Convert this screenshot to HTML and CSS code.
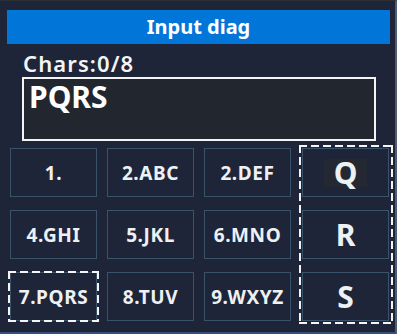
FILE: index.html
```html
<!DOCTYPE html>
<html>
<head>
<meta charset="utf-8">
<link rel="stylesheet" href="styles.css">
</head>
<body>
<div class="dialog">
  <div class="title">Input diag</div>
  <div class="count">Chars:0/8</div>
  <div class="input">PQRS</div>
  <div class="keypad">
    <div class="grid">
      <div class="key">1.</div>
      <div class="key">2.ABC</div>
      <div class="key">2.DEF</div>
      <div class="key">4.GHI</div>
      <div class="key">5.JKL</div>
      <div class="key">6.MNO</div>
      <div class="key focused">7.PQRS</div>
      <div class="key">8.TUV</div>
      <div class="key">9.WXYZ</div>
    </div>
    <div class="letters dashed">
      <div class="key big"><span class="sel">Q</span></div>
      <div class="key big">R</div>
      <div class="key big">S</div>
    </div>
  </div>
</div>
</body>
</html>
```

FILE: styles.css
```css
html, body {
  margin: 0;
  padding: 0;
  background: #1e2539;
}
body {
  width: 397px;
  height: 334px;
  overflow: hidden;
  font-family: "Noto Sans", "Open Sans", sans-serif;
  color: #f2f4f6;
}
.dialog {
  box-sizing: border-box;
  height: 334px;
  padding-top: 10px;
  border-top: 1px solid #2b2f36;
  border-right: 2px solid #4d5d74;
  border-bottom: 2px solid #34507a;
}
.title {
  margin: -1px 5px 0 7px;
  height: 34px;
  background: #0275d8;
  color: #fff;
  font-weight: 700;
  font-size: 20px;
  line-height: 34px;
  text-align: center;
}
.count {
  margin-left: 23px;
  height: 33px;
  font-size: 22px;
  font-weight: 600;
  line-height: 38px;
  letter-spacing: 1.1px;
}
.input {
  box-sizing: border-box;
  margin-left: 22px;
  width: 354px;
  height: 64px;
  border: 2px solid #f4f4f4;
  background: #22272f;
  padding-left: 5px;
  font-size: 30px;
  font-weight: 700;
  line-height: 36px;
  color: #fff;
}
.keypad {
  display: flex;
  gap: 8px;
  margin-top: 4px;
  margin-left: 10px;
}
.grid {
  display: grid;
  grid-template-columns: repeat(3, 87px);
  grid-auto-rows: 49px;
  column-gap: 10px;
  row-gap: 13px;
  padding-top: 3px;
}
.dashed {
  background:
    repeating-linear-gradient(90deg, #f4f4f4 0 8px, transparent 8px 12px) left top / 100% 2px no-repeat,
    repeating-linear-gradient(90deg, #f4f4f4 0 8px, transparent 8px 12px) left bottom / 100% 2px no-repeat,
    repeating-linear-gradient(180deg, #f4f4f4 0 8px, transparent 8px 12px) left top / 2px 100% no-repeat,
    repeating-linear-gradient(180deg, #f4f4f4 0 8px, transparent 8px 12px) right top / 2px 100% no-repeat;
}
.letters {
  display: flex;
  flex-direction: column;
  gap: 13px;
  padding: 3px 4px 3px 3px;
}
.key {
  box-sizing: border-box;
  width: 87px;
  height: 49px;
  border: 1px solid #3b526b;
  display: flex;
  align-items: center;
  justify-content: center;
  font-size: 19px;
  font-weight: 700;
  letter-spacing: 0.6px;
  color: #eef1f4;
}
.key.big {
  font-size: 30px;
  letter-spacing: 0;
}
.key.focused {
  position: relative;
}
.key.focused::after {
  content: "";
  position: absolute;
  left: -3px;
  top: -2px;
  right: -3px;
  bottom: -2px;
  background:
    repeating-linear-gradient(90deg, #f4f4f4 0 8px, transparent 8px 12px) left top / 100% 2px no-repeat,
    repeating-linear-gradient(90deg, #f4f4f4 0 8px, transparent 8px 12px) left bottom / 100% 2px no-repeat,
    repeating-linear-gradient(180deg, #f4f4f4 0 8px, transparent 8px 12px) left top / 2px 100% no-repeat,
    repeating-linear-gradient(180deg, #f4f4f4 0 8px, transparent 8px 12px) right top / 2px 100% no-repeat;
}
.sel {
  display: inline-block;
  background: #232833;
  padding: 0 10px;
  line-height: 28px;
}
```
